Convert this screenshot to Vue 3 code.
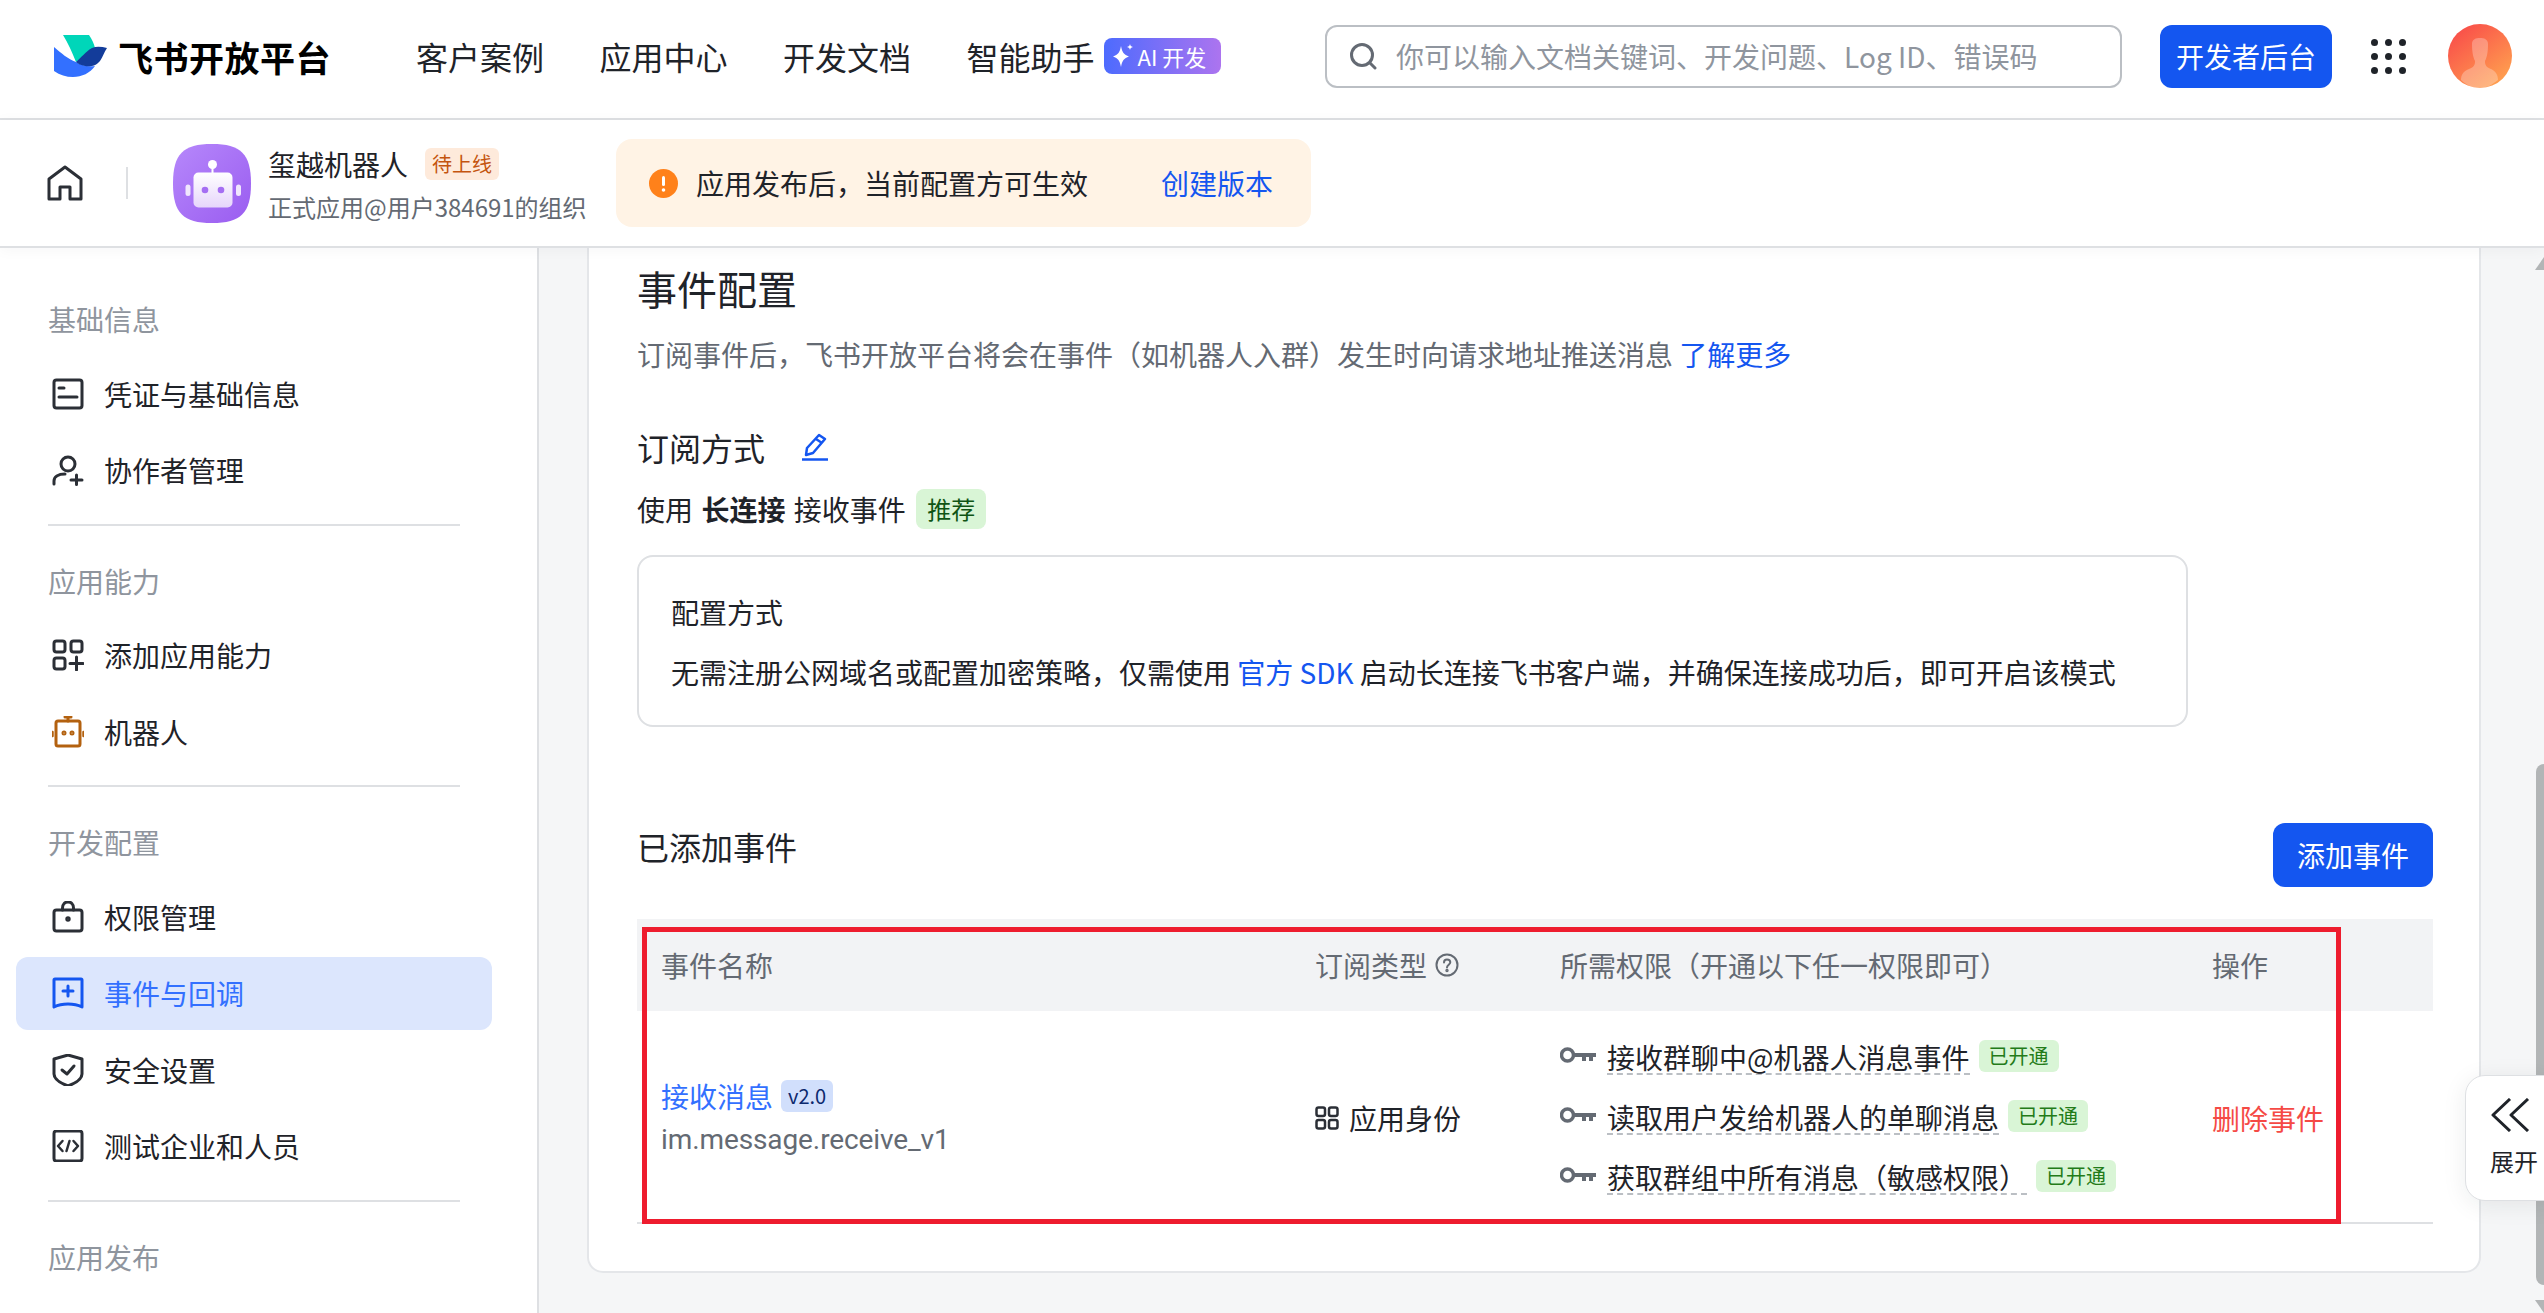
<template>
  <div class="page">
    <header class="topbar">
      <svg class="logo" viewBox="0 0 53 42" width="53" height="42">
        <path d="M9 0H35C38 4 40 9 41 13C37 15 33 18 29 22L22 27C18 17 14 8 9 0Z" fill="#00d6b9" />
        <path d="M0 12C7 18 14 24 22 27C27 30 33 32 41 31C36 38 28 42 19 42C12 42 6 40 0 36Z" fill="#3370ff" />
        <path d="M22 27C27 23 32 16 38 13C43 11 48 12 53 13C50 17 49 22 46 26C42 31 36 32 31 31C27 30 24 29 22 27Z" fill="#133c9a" />
      </svg>
      <span class="brand">飞书开放平台</span>
      <nav class="nav">
        <a v-for="item in navItems" :key="item">{{ item }}</a>
      </nav>
      <span class="ai-tag">
        <svg viewBox="0 0 22 26" width="22" height="26">
          <path d="M9 3C10 9 12 12 17 13.500C12 15 10 18 9 24C8 18 6 15 1 13.500C6 12 8 9 9 3Z" fill="#fff" />
          <path d="M18 1C18.500 3 19 3.500 21 4C19 4.500 18.500 5 18 7C17.500 5 17 4.500 15 4C17 3.500 17.500 3 18 1Z" fill="#fff" />
        </svg>
        <span>AI 开发</span>
      </span>
      <div class="search">
        <svg viewBox="0 0 28 28" width="28" height="28" fill="none" stroke="#646a73" stroke-width="3" stroke-linecap="round">
          <circle cx="13" cy="13" r="10.500" />
          <path d="M21 21L26 26" />
        </svg>
        <span>你可以输入文档关键词、开发问题、Log ID、错误码</span>
      </div>
      <button class="primary console">开发者后台</button>
      <div class="dots">
        <i v-for="n in 9" :key="n"></i>
      </div>
      <svg class="avatar" viewBox="0 0 64 64" width="64" height="64">
        <defs>
          <linearGradient id="avatarFill" x1="0.150" y1="0.100" x2="0.800" y2="0.950">
            <stop offset="0" stop-color="#f9504a" />
            <stop offset="1" stop-color="#ffa04f" />
          </linearGradient>
        </defs>
        <circle cx="32" cy="32" r="32" fill="url(#avatarFill)" />
        <path d="M24 20C24 15 28 14 32 14C36 14 40 15 40 20C40 28 39 33 37 37C37 41 38 43 43 45C47 47 50 50 50 56C44 61 38 64 32 64C25 64 18 61 13 56C13 50 16 47 21 45C26 43 27 41 27 37C25 33 24 28 24 20Z" fill="#fff" opacity="0.280" />
      </svg>
    </header>

    <div class="subbar">
      <svg class="home" viewBox="0 0 36 36" width="36" height="36" fill="none" stroke="#2b2f36" stroke-width="3" stroke-linejoin="round">
        <path d="M2 14L18 2L34 14V34H23V22H13V34H2Z" />
      </svg>
      <span class="vline"></span>
      <svg class="app-icon" viewBox="0 0 78 79" width="78" height="79">
        <defs>
          <linearGradient id="appFill" x1="0" y1="0" x2="1" y2="1">
            <stop offset="0" stop-color="#b688fb" />
            <stop offset="1" stop-color="#9a5cf0" />
          </linearGradient>
          <linearGradient id="botFill" x1="0" y1="0" x2="0" y2="1">
            <stop offset="0" stop-color="#ffffff" />
            <stop offset="1" stop-color="#e6d5fb" />
          </linearGradient>
        </defs>
        <path d="M39 0C68 0 78 10 78 39.500C78 69 68 79 39 79C10 79 0 69 0 39.500C0 10 10 0 39 0Z" fill="url(#appFill)" />
        <circle cx="39.500" cy="20.500" r="4.500" fill="#fff" />
        <rect x="38.500" y="22" width="2" height="8" fill="#fff" />
        <rect x="20.500" y="28.500" width="39" height="35" rx="5" fill="url(#botFill)" />
        <rect x="12.500" y="40.500" width="5" height="11.500" rx="2.500" fill="#f0e6fd" />
        <rect x="63" y="40.500" width="5" height="11.500" rx="2.500" fill="#f0e6fd" />
        <circle cx="32" cy="46" r="3.300" fill="#a56ef3" />
        <circle cx="48" cy="46" r="3.300" fill="#a56ef3" />
      </svg>
      <div class="app-info">
        <div class="app-name">玺越机器人<span class="pending">待上线</span></div>
        <div class="app-org">正式应用@用户384691的组织</div>
      </div>
      <div class="notice">
        <svg viewBox="0 0 29 29" width="29" height="29">
          <circle cx="14.500" cy="14.500" r="14.500" fill="#ff811a" />
          <rect x="13" y="7" width="3" height="10" rx="1.500" fill="#fff" />
          <circle cx="14.500" cy="21" r="1.800" fill="#fff" />
        </svg>
        <span class="notice-text">应用发布后，当前配置方可生效</span>
        <a class="link notice-link">创建版本</a>
      </div>
    </div>

    <div class="body">
      <aside class="sidebar">
        <template v-for="(group, i) in menu" :key="group.title">
          <hr v-if="i > 0" class="rule" />
          <div class="menu-title">{{ group.title }}</div>
          <div class="menu-items">
            <div v-for="item in group.items" :key="item.label" class="menu-item" :class="{ active: item.active }">
              <svg viewBox="0 0 32 32" width="32" height="32" fill="none" stroke="currentColor" stroke-width="3" stroke-linecap="round" stroke-linejoin="round" v-html="item.icon"></svg>
              <span>{{ item.label }}</span>
            </div>
          </div>
        </template>
      </aside>

      <main class="main">
        <section class="card">
          <h1 class="title">事件配置</h1>
          <p class="desc">订阅事件后，飞书开放平台将会在事件（如机器人入群）发生时向请求地址推送消息 <a class="link">了解更多</a></p>
          <div class="mode-head">
            <h2>订阅方式</h2>
            <svg viewBox="0 0 26 28" width="26" height="28" fill="none" stroke="#1456f0" stroke-width="2.500" stroke-linejoin="round">
              <path d="M17 2L23 6L11 20L4 22L5 15Z" />
              <path d="M14 6L20 10" />
              <path d="M0 26.500H26" />
            </svg>
          </div>
          <div class="mode-line">
            使用 <b>长连接</b> 接收事件<span class="tag-rec">推荐</span>
          </div>
          <div class="config-box">
            <div>配置方式</div>
            <div class="config-text">无需注册公网域名或配置加密策略，仅需使用 <a class="link">官方 SDK</a> 启动长连接飞书客户端，并确保连接成功后，即可开启该模式</div>
          </div>
          <div class="added-head">
            <h2>已添加事件</h2>
            <button class="primary add">添加事件</button>
          </div>

          <div class="table">
            <div class="thead">
              <div>事件名称</div>
              <div class="th-type">订阅类型
                <svg viewBox="0 0 24 24" width="24" height="24" fill="none" stroke="#646a73" stroke-width="2">
                  <circle cx="12" cy="12" r="10.500" />
                  <path d="M9 9.500C9 7.500 10.500 6.500 12 6.500C14 6.500 15.300 7.800 15.300 9.300C15.300 11.500 12 12 12 14.500" stroke-linecap="round" />
                  <circle cx="12" cy="17.500" r="0.700" />
                </svg>
              </div>
              <div>所需权限（开通以下任一权限即可）</div>
              <div>操作</div>
            </div>
            <div class="trow">
              <div>
                <div class="ev-name"><a class="link-soft">接收消息</a><span class="ver">v2.0</span></div>
                <div class="ev-key">im.message.receive_v1</div>
              </div>
              <div class="identity">
                <svg viewBox="0 0 24 24" width="24" height="24" fill="none" stroke="#2b2f36" stroke-width="2.500">
                  <rect x="1.500" y="1.500" width="8.500" height="8.500" rx="2" />
                  <rect x="14" y="1.500" width="8.500" height="8.500" rx="2" />
                  <rect x="1.500" y="14" width="8.500" height="8.500" rx="2" />
                  <rect x="14" y="14" width="8.500" height="8.500" rx="2" />
                </svg>
                应用身份
              </div>
              <div class="perms">
                <div v-for="p in perms" :key="p" class="perm">
                  <svg viewBox="0 0 36 18" width="36" height="18" fill="#646a73">
                    <circle cx="7.500" cy="9" r="6" fill="none" stroke="#646a73" stroke-width="3.500" />
                    <path d="M13 7H36V11H33V15H29V11H26V15H22V11H13Z" />
                  </svg>
                  <span class="perm-name">{{ p }}</span>
                  <span class="tag-on">已开通</span>
                </div>
              </div>
              <div class="danger">删除事件</div>
            </div>
            <div class="mark"></div>
          </div>
        </section>

        <div class="scrollbar">
          <i class="arrow up"></i>
          <i class="thumb"></i>
          <i class="arrow down"></i>
        </div>

        <div class="expand">
          <svg viewBox="0 0 40 34" width="40" height="34" fill="none" stroke="#1f2329" stroke-width="3" stroke-linejoin="round">
            <path d="M20 1L3 17L20 33" />
            <path d="M38 1L21 17L38 33" />
          </svg>
          <span>展开</span>
        </div>
      </main>
    </div>
  </div>
</template>

<script setup>
const navItems = ["客户案例", "应用中心", "开发文档", "智能助手"];

const perms = [
  "接收群聊中@机器人消息事件",
  "读取用户发给机器人的单聊消息",
  "获取群组中所有消息（敏感权限）",
];

// icon bodies, all on a 32x32 box
const icons = {
  card: '<rect x="2" y="2" width="28" height="28" rx="2.500"/><path d="M7 10H12M7 19H25"/>',
  person: '<circle cx="16" cy="10" r="7"/><path d="M2 30V27C2 23 6 20 13 20"/><path d="M19 26H30M24.500 21V30.500"/>',
  apps: '<rect x="2" y="2" width="11" height="11" rx="2.500"/><rect x="19" y="2" width="11" height="11" rx="2.500"/><rect x="2" y="19" width="11" height="11" rx="2.500"/><path d="M18 24.500H31M24.500 18V31"/>',
  robot: '<rect x="4" y="5" width="24" height="25" rx="2" stroke="#b3610f"/><path d="M16 5V1M13 1H19" stroke="#b3610f"/><path d="M0.500 16V20M31.500 16V20" stroke="#b3610f" stroke-width="2.500"/><circle cx="12" cy="17" r="1" stroke="#b3610f"/><circle cx="20" cy="17" r="1" stroke="#b3610f"/>',
  lock: '<rect x="2" y="9" width="28" height="21" rx="2.500"/><path d="M10.500 9V7C10.500 3 13 1 16 1C19 1 21.500 3 21.500 7V9"/><circle cx="16" cy="18" r="1.200"/>',
  event: '<path d="M2 3C2 2.500 2.500 2 3 2H29C29.500 2 30 2.500 30 3V30C22 26 10 26 2 30Z"/><path d="M11 14H21M16 9V19"/>',
  shield: '<path d="M16 1L30 5V20C30 25 24 29 16 32C8 29 2 25 2 20V5Z"/><path d="M10 16L15 20L22 12"/>',
  code: '<rect x="2" y="1" width="28" height="30" rx="2.500"/><path d="M10.500 11L6 16L10.500 21M21.500 11L26 16L21.500 21M17.500 11L14.500 21" stroke-width="2.500"/>',
};

const menu = [
  {
    title: "基础信息",
    items: [
      { label: "凭证与基础信息", icon: icons.card },
      { label: "协作者管理", icon: icons.person },
    ],
  },
  {
    title: "应用能力",
    items: [
      { label: "添加应用能力", icon: icons.apps },
      { label: "机器人", icon: icons.robot },
    ],
  },
  {
    title: "开发配置",
    items: [
      { label: "权限管理", icon: icons.lock },
      { label: "事件与回调", icon: icons.event, active: true },
      { label: "安全设置", icon: icons.shield },
      { label: "测试企业和人员", icon: icons.code },
    ],
  },
  { title: "应用发布", items: [] },
];
</script>

<style scoped>
.page {
  height: 1313px;
  overflow: hidden;
  display: flex;
  flex-direction: column;
  background: #fff;
  color: #1f2329;
  font-family: "Noto Sans CJK SC", sans-serif;
  font-size: 28px;
}

a {
  cursor: pointer;
}

.link {
  color: #1456f0;
}

.primary {
  border: 0;
  border-radius: 12px;
  background: #1456f0;
  color: #fff;
  font: inherit;
  padding: 0;
}

.topbar {
  flex: none;
  height: 120px;
  box-sizing: border-box;
  padding: 0 0 6px 54px;
  border-bottom: 2px solid #dee0e3;
  display: flex;
  align-items: center;
}

.logo {
  flex: none;
}

.brand {
  margin-left: 11px;
  font-size: 35px;
  font-weight: 700;
  letter-spacing: 0.500px;
  color: #000;
  white-space: nowrap;
}

.nav {
  display: flex;
  gap: 55.500px;
  margin-left: 85px;
  font-size: 32px;
  white-space: nowrap;
}

.ai-tag {
  display: flex;
  align-items: center;
  gap: 4px;
  width: 117px;
  height: 36px;
  box-sizing: border-box;
  margin-left: 9px;
  padding-left: 8px;
  border-radius: 8px;
  background: linear-gradient(90deg, #4d6bfe, #ac74ef);
  color: #fff;
  font-size: 22px;
  white-space: nowrap;
}

.search {
  display: flex;
  align-items: center;
  gap: 19px;
  width: 797px;
  height: 63px;
  box-sizing: border-box;
  margin-left: 104.500px;
  padding-left: 22px;
  border: 2px solid #bbbfc4;
  border-radius: 12px;
  color: #8f959e;
  white-space: nowrap;
}

.console {
  width: 172px;
  height: 63px;
  margin-left: 38px;
}

.dots {
  display: grid;
  grid-template-columns: repeat(3, 7px);
  gap: 7px;
  margin-left: 39px;
}

.dots i {
  width: 7px;
  height: 7px;
  border-radius: 50%;
  background: #1f2329;
}

.avatar {
  margin-left: 42px;
  flex: none;
}

.subbar {
  flex: none;
  position: relative;
  z-index: 1;
  height: 128px;
  box-sizing: border-box;
  border-bottom: 2px solid #dee0e3;
  box-shadow: 0 2px 14px rgba(31, 35, 41, 0.04);
  background: #fff;
  display: flex;
  align-items: center;
  padding-left: 47px;
}

.vline {
  width: 2px;
  height: 32px;
  margin-left: 43px;
  background: #dee0e3;
}

.app-icon {
  margin-left: 45px;
  flex: none;
}

.app-info {
  width: 316px;
  margin-left: 17px;
  padding-top: 5px;
  white-space: nowrap;
}

.app-name {
  display: flex;
  align-items: center;
  line-height: 36px;
}

.pending {
  margin-left: 17px;
  padding: 0 7px;
  height: 32px;
  line-height: 32px;
  border-radius: 6px;
  background: #feeadb;
  color: #c4540e;
  font-size: 20px;
}

.app-org {
  margin-top: 7px;
  line-height: 36px;
  font-size: 24px;
  color: #646a73;
}

.notice {
  display: flex;
  align-items: center;
  width: 695px;
  height: 88px;
  box-sizing: border-box;
  margin-left: 32px;
  padding-left: 33px;
  border-radius: 16px;
  background: #fff3e5;
  white-space: nowrap;
}

.notice-text {
  margin-left: 18px;
}

.notice-link {
  margin-left: 73px;
}

.body {
  flex: 1;
  min-height: 0;
  display: flex;
}

.sidebar {
  flex: none;
  width: 539px;
  box-sizing: border-box;
  padding: 49px 0 0 16px;
  border-right: 2px solid #dee0e3;
  overflow: hidden;
}

.menu-title {
  height: 44px;
  line-height: 44px;
  margin-left: 32px;
  margin-bottom: 16px;
  color: #8f959e;
}

.menu-items {
  display: flex;
  flex-direction: column;
  gap: 3.500px;
}

.menu-item {
  display: flex;
  align-items: center;
  gap: 20px;
  width: 476px;
  height: 73px;
  box-sizing: border-box;
  padding-left: 36px;
  border-radius: 12px;
  color: #2b2f36;
}

.menu-item span {
  color: #1f2329;
}

.menu-item.active {
  background: #dce6fd;
  color: #1456f0;
}

.menu-item.active span {
  color: #3370ff;
}

.rule {
  width: 412px;
  height: 2px;
  margin: 17px 0 33px 32px;
  border: 0;
  background: #dee0e3;
}

.main {
  flex: 1;
  min-width: 0;
  position: relative;
  background: #f5f6f7;
  padding-left: 48px;
}

.card {
  width: 1894px;
  height: 1025px;
  box-sizing: border-box;
  padding: 12px 46px 0 48px;
  background: #fff;
  border: 2px solid #e4e6e9;
  border-top: 0;
  border-radius: 0 0 16px 16px;
}

.title {
  margin: 0;
  font-size: 40px;
  font-weight: 400;
  line-height: 56px;
}

.desc {
  margin: 16px 0 0;
  line-height: 44px;
  color: #646a73;
  white-space: nowrap;
}

h2 {
  margin: 0;
  font-size: 32px;
  font-weight: 400;
  line-height: 48px;
}

.mode-head {
  display: flex;
  align-items: center;
  gap: 37px;
  margin-top: 47px;
}

.mode-line {
  display: flex;
  align-items: center;
  gap: 0.300em;
  margin-top: 16px;
  line-height: 44px;
}

.tag-rec {
  margin-left: 2px;
  padding: 0 11px;
  height: 40px;
  line-height: 40px;
  border-radius: 8px;
  background: #d9f5d6;
  color: #0f5414;
  font-size: 24px;
}

.config-box {
  width: 1551px;
  height: 172px;
  box-sizing: border-box;
  margin-top: 24px;
  padding: 33px 32px 0;
  border: 2px solid #dee0e3;
  border-radius: 16px;
  line-height: 44px;
}

.config-text {
  margin-top: 16px;
  white-space: nowrap;
}

.added-head {
  display: flex;
  justify-content: space-between;
  align-items: flex-start;
  margin-top: 96px;
}

.added-head h2 {
  margin-top: -1px;
}

.add {
  width: 160px;
  height: 64px;
}

.table {
  position: relative;
  margin-top: 32px;
  width: 1796px;
}

.thead,
.trow {
  display: grid;
  grid-template-columns: 654px 245px 652px 245px;
  align-items: center;
}

.thead > div,
.trow > div {
  padding-left: 24px;
}

.thead {
  height: 92px;
  background: #f2f3f5;
  color: #646a73;
  white-space: nowrap;
}

.th-type {
  display: flex;
  align-items: center;
  gap: 8px;
}

.trow {
  height: 213px;
  box-sizing: border-box;
  padding-top: 2px;
  border-bottom: 2px solid #dee0e3;
}

.ev-name {
  display: flex;
  align-items: center;
  gap: 8px;
  line-height: 44px;
}

.link-soft {
  color: #3370ff;
}

.ver {
  height: 32px;
  line-height: 32px;
  padding: 0 7px;
  border-radius: 6px;
  background: #d1dffc;
  color: #0c296e;
  font-size: 20px;
}

.ev-key {
  line-height: 44px;
  font-family: Roboto, sans-serif;
  letter-spacing: -0.100px;
  color: #646a73;
}

.identity {
  display: flex;
  align-items: center;
  gap: 10px;
  white-space: nowrap;
}

.perms {
  display: flex;
  flex-direction: column;
  gap: 16px;
}

.perm {
  display: flex;
  align-items: center;
  height: 44px;
  white-space: nowrap;
}

.perm svg {
  margin-top: -6px;
  flex: none;
}

.perm-name {
  margin-left: 11px;
  line-height: 32px;
  border-bottom: 2px dashed #bbbfc4;
}

.tag-on {
  margin-left: 9px;
  margin-top: -4px;
  padding: 0 10px;
  height: 32px;
  line-height: 32px;
  border-radius: 6px;
  background: #d9f5d6;
  color: #237b19;
  font-size: 20px;
}

.danger {
  color: #f54a45;
  white-space: nowrap;
}

/* red annotation drawn over the table */
.mark {
  position: absolute;
  left: 5px;
  top: 8px;
  width: 1699px;
  height: 297px;
  box-sizing: border-box;
  border: 5px solid #ee1c2e;
  pointer-events: none;
}

.scrollbar i {
  position: absolute;
  display: block;
}

.thumb {
  left: 1997px;
  top: 516px;
  width: 16px;
  height: 521px;
  border-radius: 8px;
  background: #b2b5b6;
}

.arrow {
  left: 1996px;
  width: 18px;
  height: 13px;
  background: #b2b5b6;
}

.up {
  top: 9px;
  clip-path: polygon(50% 0, 100% 100%, 0 100%);
}

.down {
  top: 1052px;
  clip-path: polygon(0 0, 100% 0, 50% 100%);
}

.expand {
  position: absolute;
  right: -20px;
  top: 827px;
  width: 99px;
  height: 126px;
  box-sizing: border-box;
  padding: 22px 0 0 24px;
  background: #fff;
  border: 1px solid #dee0e3;
  border-radius: 20px;
  box-shadow: 0 4px 24px rgba(31, 35, 41, 0.08);
  display: flex;
  flex-direction: column;
  gap: 12px;
  font-size: 24px;
  line-height: 34px;
}

.expand svg {
  flex: none;
}
</style>

<style>
html,
body {
  margin: 0;
  overflow: hidden;
}
</style>
